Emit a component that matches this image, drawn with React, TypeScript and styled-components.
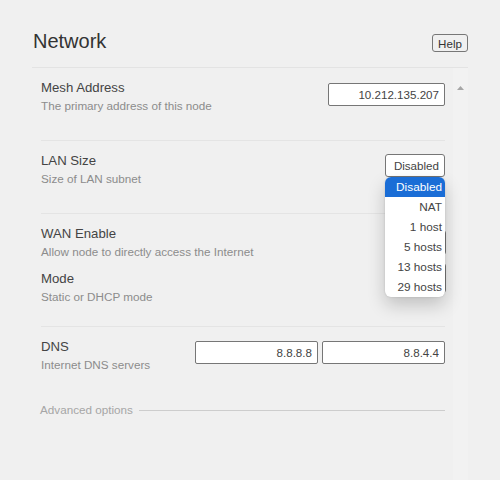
import React from "react";
import styled, { createGlobalStyle } from "styled-components";

const GlobalStyle = createGlobalStyle`
  html, body { margin: 0; padding: 0; background: #f0f0f0; }
  body { font-family: "Liberation Sans", Arial, sans-serif; color: #333; }
  #root { height: 480px; }
`;

const Page = styled.div`
  box-sizing: border-box;
  height: 480px;
  padding: 0 32px 0 32px;
  display: flex;
  flex-direction: column;
  overflow: hidden;
`;

const Header = styled.header`
  display: flex;
  justify-content: space-between;
  align-items: flex-start;
  padding: 29px 0 14px 0;
  border-bottom: 1px solid #e3e3e3;
`;

const Title = styled.h1`
  margin: 0 0 0 1px;
  font-size: 20px;
  line-height: 24px;
  font-weight: normal;
  color: #333;
`;

const HelpButton = styled.button`
  box-sizing: border-box;
  margin-top: 5px;
  width: 36px;
  height: 18px;
  padding: 0;
  border: 1px solid #777;
  border-radius: 3px;
  background: transparent;
  font-family: "Liberation Sans", Arial, sans-serif;
  font-size: 11.6px;
  color: #333;
`;

const ScrollArea = styled.div`
  flex: 1;
  min-height: 0;
  display: flex;
`;

const Content = styled.div`
  flex: 1;
  padding: 0 8px 0 9px;
`;

const ScrollTrack = styled.div`
  width: 15px;
  background: #f2f2f2;
  display: flex;
  justify-content: center;
  align-items: flex-start;
  padding-top: 18px;
`;

const Row = styled.section<{ $bottom: number; $divided?: boolean }>`
  display: flex;
  flex-direction: column;
  gap: 9px;
  padding: 10px 0 ${(p) => p.$bottom}px;
  border-bottom: ${(p) => (p.$divided ? "1px solid #e4e4e4" : "none")};
`;

const Field = styled.div`
  display: flex;
  justify-content: space-between;
  align-items: flex-start;
`;

const Texts = styled.div`
  display: flex;
  flex-direction: column;
`;

const Label = styled.div`
  font-size: 13.2px;
  line-height: 19px;
  color: #444;
`;

const Desc = styled.div`
  margin-top: 1px;
  font-size: 11.7px;
  line-height: 16px;
  color: #8c8c8c;
`;

const Controls = styled.div<{ $top: number; $right?: number }>`
  display: flex;
  gap: 4px;
  margin-top: ${(p) => p.$top}px;
  margin-right: ${(p) => p.$right ?? 0}px;
`;

const TextInput = styled.input<{ $width: number }>`
  box-sizing: border-box;
  width: ${(p) => p.$width}px;
  height: 23px;
  padding: 0 5px;
  border: 1px solid #767676;
  border-radius: 2px;
  background: #fff;
  text-align: right;
  font-family: "Liberation Sans", Arial, sans-serif;
  font-size: 11.6px;
  color: #444;
  outline: none;
`;

const SelectWrap = styled.div`
  position: relative;
`;

const SelectBox = styled.div<{ $width: number; $height: number }>`
  box-sizing: border-box;
  width: ${(p) => p.$width}px;
  height: ${(p) => p.$height}px;
  padding-right: 5px;
  border: 1px solid #767676;
  border-radius: 3px;
  background: #fff;
  text-align: right;
  font-size: 11.6px;
  line-height: ${(p) => p.$height - 2}px;
  color: #444;
`;

const Menu = styled.ul`
  position: absolute;
  z-index: 10;
  top: 100%;
  left: 0;
  width: 60px;
  margin: 0;
  padding: 0;
  list-style: none;
  background: #fff;
  border-radius: 6px;
  overflow: hidden;
  box-shadow: 0 8px 18px rgba(0, 0, 0, 0.2), 0 0 2px rgba(0, 0, 0, 0.15);
`;

const Option = styled.li<{ $selected?: boolean }>`
  height: 20px;
  line-height: 20px;
  padding-right: 3px;
  text-align: right;
  font-size: 11.8px;
  color: ${(p) => (p.$selected ? "#fff" : "#444")};
  background: ${(p) => (p.$selected ? "#1a6dd6" : "transparent")};
`;

const Advanced = styled.div`
  display: flex;
  align-items: center;
  gap: 6px;
  margin: 29px 0 0 -1px;
  font-size: 11.7px;
  line-height: 16px;
  color: #a6a6a6;
`;

const Rule = styled.div`
  flex: 1;
  height: 1px;
  background: #cdcdcd;
`;

const lanOptions = ["Disabled", "NAT", "1 host", "5 hosts", "13 hosts", "29 hosts"];

export default function App() {
  return (
    <>
      <GlobalStyle />
      <Page>
        <Header>
          <Title>Network</Title>
          <HelpButton>Help</HelpButton>
        </Header>
        <ScrollArea>
          <Content>
            <Row $bottom={26} $divided>
              <Field>
                <Texts>
                  <Label>Mesh Address</Label>
                  <Desc>The primary address of this node</Desc>
                </Texts>
                <Controls $top={5}>
                  <TextInput $width={117} defaultValue="10.212.135.207" />
                </Controls>
              </Field>
            </Row>
            <Row $bottom={26} $divided>
              <Field>
                <Texts>
                  <Label>LAN Size</Label>
                  <Desc>Size of LAN subnet</Desc>
                </Texts>
                <Controls $top={3}>
                  <SelectWrap>
                    <SelectBox $width={60} $height={23}>Disabled</SelectBox>
                    <Menu>
                      {lanOptions.map((o, i) => (
                        <Option key={o} $selected={i === 0}>
                          {o}
                        </Option>
                      ))}
                    </Menu>
                  </SelectWrap>
                </Controls>
              </Field>
            </Row>
            <Row $bottom={21} $divided>
              <Field>
                <Texts>
                  <Label>WAN Enable</Label>
                  <Desc>Allow node to directly access the Internet</Desc>
                </Texts>
                <Controls $top={6} $right={-1}>
                  <SelectBox $width={50} $height={25} />
                </Controls>
              </Field>
              <Field>
                <Texts>
                  <Label>Mode</Label>
                  <Desc>Static or DHCP mode</Desc>
                </Texts>
                <Controls $top={-6} $right={-1}>
                  <SelectBox $width={50} $height={30} />
                </Controls>
              </Field>
            </Row>
            <Row $bottom={0}>
              <Field>
                <Texts>
                  <Label>DNS</Label>
                  <Desc>Internet DNS servers</Desc>
                </Texts>
                <Controls $top={4}>
                  <TextInput $width={123} defaultValue="8.8.8.8" />
                  <TextInput $width={123} defaultValue="8.8.4.4" />
                </Controls>
              </Field>
            </Row>
            <Advanced>
              <span>Advanced options</span>
              <Rule />
            </Advanced>
          </Content>
          <ScrollTrack>
            <svg width="7" height="4" viewBox="0 0 7 4">
              <path d="M3.5 0 L7 4 L0 4 Z" fill="#a6a6a6" />
            </svg>
          </ScrollTrack>
        </ScrollArea>
      </Page>
    </>
  );
}
